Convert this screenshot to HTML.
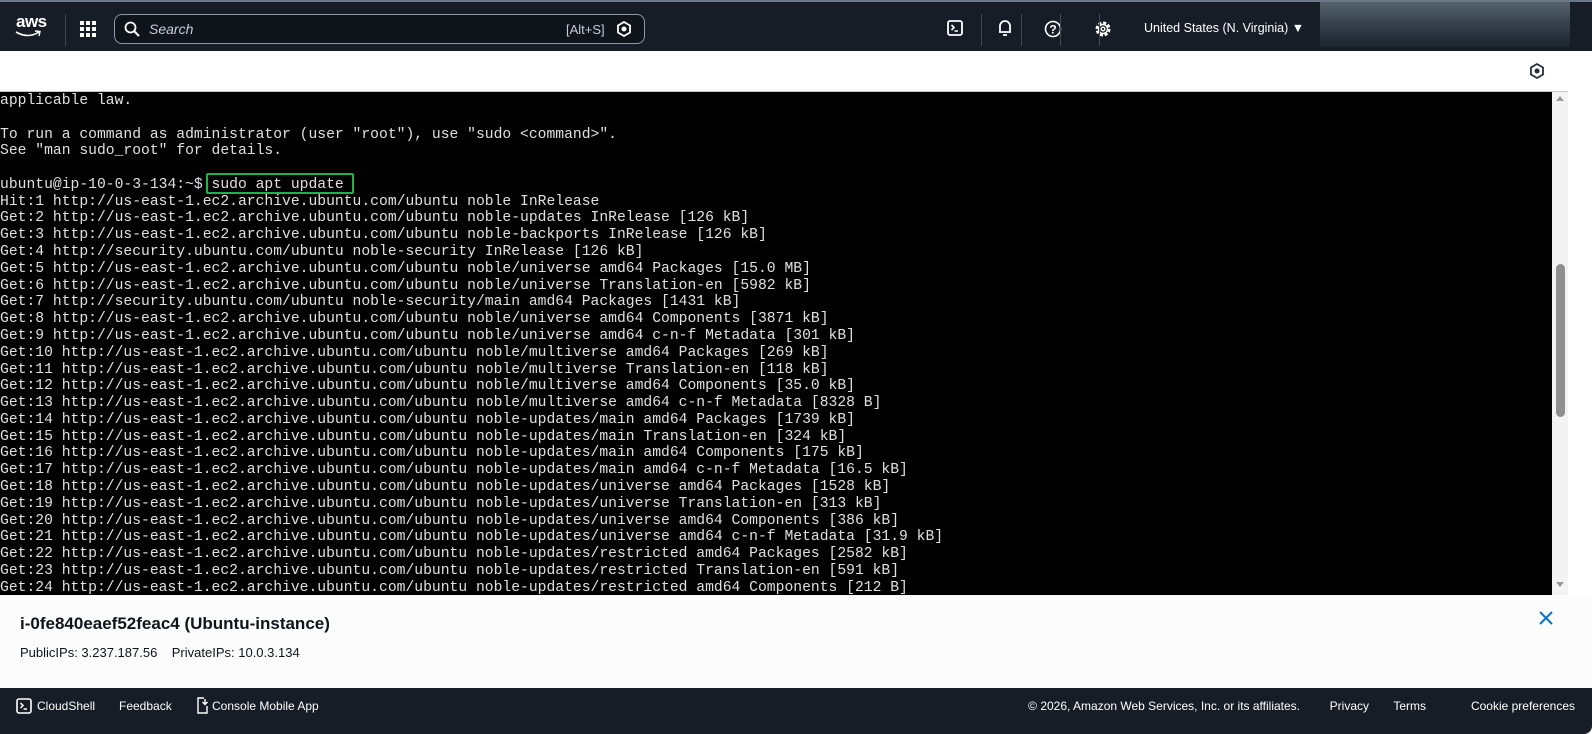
<!DOCTYPE html>
<html><head><meta charset="utf-8"><style>
*{margin:0;padding:0;box-sizing:border-box}
body{width:1592px;height:734px;overflow:hidden;background:#fff;font-family:"Liberation Sans",sans-serif;position:relative}
.hdr{position:absolute;left:0;top:0;width:1592px;height:51px;background:#161d26;border-top:2px solid #6b7786}
.ab{position:absolute;color:#fff}
.sep{position:absolute;top:12px;width:1px;height:32px;background:#3f4753}
.search{position:absolute;left:114px;top:12px;width:531px;height:30px;border:1.5px solid #8d99a8;border-radius:8px;background:#0f141a}
.term{position:absolute;left:0;top:92px;width:1552px;height:503px;background:#000;overflow:hidden}
.term pre{font-family:"Liberation Mono",monospace;font-size:14.7px;line-height:16.78px;color:#e0e0e0;position:absolute;left:0;top:1px}
.sb{position:absolute;left:1552px;top:92px;width:16px;height:503px;background:#f3f3f3}
.ft{position:absolute;left:0;top:688px;width:1592px;height:46px;background:#161d26;border-radius:0 0 8px 0;color:#fff;font-size:12px}
.ft span{position:absolute;top:11px;white-space:nowrap}
</style></head><body>
<div class="hdr">
 <div class="ab" style="left:16px;top:10px;font-size:17px;font-weight:bold;letter-spacing:-0.5px">aws</div>
 <svg class="ab" style="left:14px;top:28px" width="28" height="8"><path d="M2 2 Q14 9 25 2" stroke="#fff" stroke-width="1.6" fill="none"/><path d="M21 1 L26 1.5 L25 6" stroke="#fff" stroke-width="1.4" fill="none"/></svg>
 <div class="sep" style="left:65px"></div>
 <svg class="ab" style="left:80px;top:19px" width="16" height="16" fill="#fff"><rect x="0" y="0" width="4" height="4"/><rect x="6" y="0" width="4" height="4"/><rect x="12" y="0" width="4" height="4"/><rect x="0" y="6" width="4" height="4"/><rect x="6" y="6" width="4" height="4"/><rect x="12" y="6" width="4" height="4"/><rect x="0" y="12" width="4" height="4"/><rect x="6" y="12" width="4" height="4"/><rect x="12" y="12" width="4" height="4"/></svg>
 <div class="search">
  <svg style="position:absolute;left:9px;top:6px" width="16" height="16"><circle cx="6.5" cy="6.5" r="5" stroke="#fff" stroke-width="1.8" fill="none"/><path d="M10 10 L15 15" stroke="#fff" stroke-width="2"/></svg>
  <span style="position:absolute;left:34px;top:6px;color:#c6ccd4;font-style:italic;font-size:14px">Search</span>
  <span style="position:absolute;left:451px;top:7px;color:#c6ccd4;font-size:13px">[Alt+S]</span>
  <svg style="position:absolute;left:502px;top:6px" width="14" height="16"><path d="M7 1 L13 4.5 L13 11.5 L7 15 L1 11.5 L1 4.5Z" stroke="#fff" stroke-width="1.8" fill="none"/><circle cx="7" cy="8" r="2.5" fill="#fff"/></svg>
 </div>
 <svg class="ab" style="left:947px;top:18px" width="16" height="16"><rect x="1" y="1" width="14" height="14" rx="2" stroke="#fff" stroke-width="1.8" fill="none"/><path d="M4.5 5 L7 7.5 L4.5 10 M7.5 11 H11" stroke="#fff" stroke-width="1.6" fill="none"/></svg>
 <div class="sep" style="left:981px"></div>
 <svg class="ab" style="left:997px;top:17px" width="16" height="18"><path d="M3 13 V7 a5 5 0 0 1 10 0 V13 H2 H14 M6 16 H10" stroke="#fff" stroke-width="1.8" fill="none"/></svg>
 <div class="sep" style="left:1021px"></div>
 <svg class="ab" style="left:1044px;top:18px" width="18" height="18"><circle cx="9" cy="9" r="7.5" stroke="#fff" stroke-width="1.6" fill="none"/><text x="9" y="13.5" font-size="12" font-weight="bold" fill="#fff" text-anchor="middle" font-family="Liberation Sans">?</text></svg>
 <div class="sep" style="left:1060px"></div>
 <svg class="ab" style="left:1094px;top:18px" width="18" height="18"><circle cx="9" cy="9" r="6" stroke="#fff" stroke-width="3" stroke-dasharray="3 1.7" fill="none"/><circle cx="9" cy="9" r="4.5" stroke="#fff" stroke-width="1.4" fill="none"/><circle cx="9" cy="9" r="1.8" stroke="#fff" stroke-width="1.4" fill="none"/></svg>
 <div class="sep" style="left:1099px;left:1099px;opacity:0"></div>
 <div class="sep" style="left:1099px"></div>
 <div class="ab" style="left:1144px;top:19px;font-size:12.5px">United States (N. Virginia) ▼</div>
 <div style="position:absolute;left:1320px;top:0;width:250px;height:45px;background:linear-gradient(180deg,#56636f 0%,#3b4651 40%,#1c242d 100%)"></div>
</div>
<svg style="position:absolute;left:1530px;top:63px" width="14" height="16"><path d="M7 1 L13 4.5 L13 11.5 L7 15 L1 11.5 L1 4.5Z" stroke="#232f3e" stroke-width="1.8" fill="none"/><circle cx="7" cy="8" r="2.5" fill="#232f3e"/></svg>
<div style="position:absolute;left:0;top:91px;width:1568px;height:1px;background:#c6c6cd"></div>
<div class="term"><pre>applicable law.

To run a command as administrator (user "root"), use "sudo &lt;command&gt;".
See "man sudo_root" for details.

ubuntu@ip-10-0-3-134:~$ sudo apt update
Hit:1 http://us-east-1.ec2.archive.ubuntu.com/ubuntu noble InRelease
Get:2 http://us-east-1.ec2.archive.ubuntu.com/ubuntu noble-updates InRelease [126 kB]
Get:3 http://us-east-1.ec2.archive.ubuntu.com/ubuntu noble-backports InRelease [126 kB]
Get:4 http://security.ubuntu.com/ubuntu noble-security InRelease [126 kB]
Get:5 http://us-east-1.ec2.archive.ubuntu.com/ubuntu noble/universe amd64 Packages [15.0 MB]
Get:6 http://us-east-1.ec2.archive.ubuntu.com/ubuntu noble/universe Translation-en [5982 kB]
Get:7 http://security.ubuntu.com/ubuntu noble-security/main amd64 Packages [1431 kB]
Get:8 http://us-east-1.ec2.archive.ubuntu.com/ubuntu noble/universe amd64 Components [3871 kB]
Get:9 http://us-east-1.ec2.archive.ubuntu.com/ubuntu noble/universe amd64 c-n-f Metadata [301 kB]
Get:10 http://us-east-1.ec2.archive.ubuntu.com/ubuntu noble/multiverse amd64 Packages [269 kB]
Get:11 http://us-east-1.ec2.archive.ubuntu.com/ubuntu noble/multiverse Translation-en [118 kB]
Get:12 http://us-east-1.ec2.archive.ubuntu.com/ubuntu noble/multiverse amd64 Components [35.0 kB]
Get:13 http://us-east-1.ec2.archive.ubuntu.com/ubuntu noble/multiverse amd64 c-n-f Metadata [8328 B]
Get:14 http://us-east-1.ec2.archive.ubuntu.com/ubuntu noble-updates/main amd64 Packages [1739 kB]
Get:15 http://us-east-1.ec2.archive.ubuntu.com/ubuntu noble-updates/main Translation-en [324 kB]
Get:16 http://us-east-1.ec2.archive.ubuntu.com/ubuntu noble-updates/main amd64 Components [175 kB]
Get:17 http://us-east-1.ec2.archive.ubuntu.com/ubuntu noble-updates/main amd64 c-n-f Metadata [16.5 kB]
Get:18 http://us-east-1.ec2.archive.ubuntu.com/ubuntu noble-updates/universe amd64 Packages [1528 kB]
Get:19 http://us-east-1.ec2.archive.ubuntu.com/ubuntu noble-updates/universe Translation-en [313 kB]
Get:20 http://us-east-1.ec2.archive.ubuntu.com/ubuntu noble-updates/universe amd64 Components [386 kB]
Get:21 http://us-east-1.ec2.archive.ubuntu.com/ubuntu noble-updates/universe amd64 c-n-f Metadata [31.9 kB]
Get:22 http://us-east-1.ec2.archive.ubuntu.com/ubuntu noble-updates/restricted amd64 Packages [2582 kB]
Get:23 http://us-east-1.ec2.archive.ubuntu.com/ubuntu noble-updates/restricted Translation-en [591 kB]
Get:24 http://us-east-1.ec2.archive.ubuntu.com/ubuntu noble-updates/restricted amd64 Components [212 B]</pre>
<div style="position:absolute;left:206px;top:81px;width:148px;height:21px;border:2px solid #22b14c;border-radius:2px"></div>
</div>
<div class="sb">
 <div style="position:absolute;left:4px;top:4px;width:0;height:0;border-left:4px solid transparent;border-right:4px solid transparent;border-bottom:5px solid #999"></div>
 <div style="position:absolute;left:4px;top:172px;width:9px;height:153px;background:#8f8f8f;border-radius:5px"></div>
 <div style="position:absolute;left:4px;top:490px;width:0;height:0;border-left:4px solid transparent;border-right:4px solid transparent;border-top:5px solid #999"></div>
</div>
<div style="position:absolute;left:0;top:595px;width:1592px;height:93px;background:#fcfcfd"></div>
<div style="position:absolute;left:20px;top:614px;font-size:17px;font-weight:bold;color:#0f141a">i-0fe840eaef52feac4 (Ubuntu-instance)</div>
<div style="position:absolute;left:20px;top:645px;font-size:13px;color:#0f141a">PublicIPs: 3.237.187.56 &nbsp;&nbsp; PrivateIPs: 10.0.3.134</div>
<svg style="position:absolute;left:1539px;top:611px" width="14" height="14"><path d="M1 1 L13 13 M13 1 L1 13" stroke="#0972d3" stroke-width="2"/></svg>
<div class="ft">
 <svg style="position:absolute;left:16px;top:10px" width="16" height="16"><rect x="1" y="1" width="14" height="14" rx="2" stroke="#fff" stroke-width="1.6" fill="none"/><path d="M4.5 5 L7 7.5 L4.5 10 M7.5 11 H11" stroke="#fff" stroke-width="1.5" fill="none"/></svg>
 <span style="left:37px">CloudShell</span>
 <span style="left:119px">Feedback</span>
 <svg style="position:absolute;left:196px;top:9px" width="14" height="17"><path d="M8 1 H2 V16 H11 V9 M9 2 V7 M6.5 5 L9 7.5 L11.5 5" stroke="#fff" stroke-width="1.4" fill="none"/></svg>
 <span style="left:212px">Console Mobile App</span>
 <span style="right:292px">© 2026, Amazon Web Services, Inc. or its affiliates.</span>
 <span style="right:223px">Privacy</span>
 <span style="right:166px">Terms</span>
 <span style="right:17px">Cookie preferences</span>
</div>
</body></html>
